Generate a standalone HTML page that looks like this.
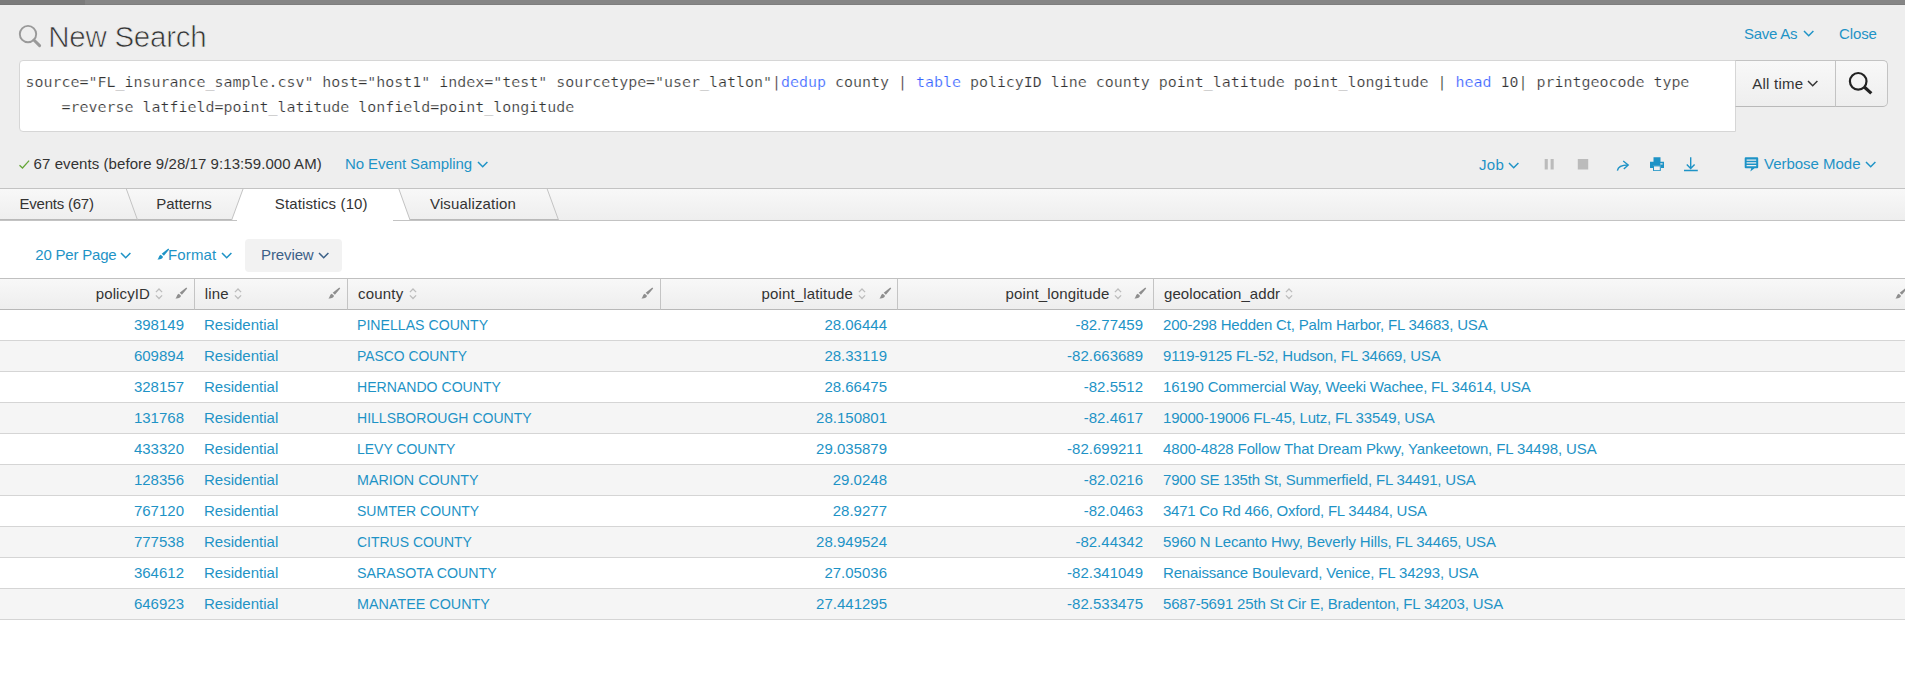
<!DOCTYPE html>
<html lang="en">
<head>
<meta charset="utf-8">
<title>New Search</title>
<style>
html,body{margin:0;padding:0;}
body{width:1905px;height:688px;overflow:hidden;background:#fff;position:relative;font-family:"Liberation Sans",Arial,sans-serif;font-size:15px;color:#333;}
a{text-decoration:none;}
.abs{position:absolute;white-space:nowrap;}
.tx{line-height:18px;margin:0;font-weight:normal;}
#topbar{left:0;top:0;width:1905px;height:4px;background:#868686;border-bottom:1px solid #7e7e7e;box-shadow:0 1px 0 #f6f6f6;}
#topbar i{position:absolute;left:0;top:0;width:85px;height:4px;background:#7b7b7b;border-bottom:1px solid #767676;display:block;}
#head{left:0;top:5px;width:1905px;height:183px;background:#eee;}
#sbox{left:19px;top:60px;width:1717px;height:72px;background:#fff;border:1px solid #d6d6d6;border-radius:4px 0 0 4px;box-sizing:border-box;}
#q{left:25.600px;top:70px;font-family:"DejaVu Sans Mono","Liberation Mono",monospace;font-size:14.95px;line-height:25px;color:#333;white-space:pre;-webkit-text-stroke:0.220px #fff;}
#q b{font-weight:normal;color:#3863ff;}
#tbtn{left:1735px;top:60px;width:101px;height:47px;box-sizing:border-box;border:1px solid #c3c3c3;border-left-color:#d6d6d6;border-bottom-color:#b9b9b9;background:linear-gradient(#f8f8f8,#eee);}
#sbtn{left:1835px;top:60px;width:53px;height:47px;box-sizing:border-box;border:1px solid #c3c3c3;border-bottom-color:#b9b9b9;border-radius:0 5px 5px 0;background:linear-gradient(#f8f8f8,#eee);}
#tabs{left:0;top:188px;width:1905px;height:33px;box-sizing:border-box;border-top:1px solid #c3c3c3;border-bottom:1px solid #c3c3c3;background:linear-gradient(#f8f8f8,#eee);}
#prev{left:245px;top:239px;width:97px;height:33px;background:#f2f2f2;border-radius:4px;}
table{border-collapse:separate;border-spacing:0;position:absolute;left:0;top:278px;width:1905px;table-layout:fixed;font-size:15px;}
th{height:30px;padding:0;border-top:1px solid #c0c0c0;border-bottom:1px solid #b8b8b8;border-right:1px solid #c4c4c4;background:linear-gradient(#f8f8f8,#eee);font-weight:normal;color:#333;position:relative;text-align:left;}
th:last-child{border-right:none;}
th .cs{position:absolute;top:6px;line-height:18px;}
td{height:30px;padding:0 10px 0 9px;border-bottom:1px solid #d5d5d5;color:#1e93c6;line-height:30px;white-space:nowrap;overflow:hidden;}
tr:nth-child(even) td{background:#f5f5f5;}
td .cs{position:relative;display:inline-block;line-height:30px;}
.r{text-align:right;padding-right:11px;font-kerning:none;}
</style>
</head>
<body>
<div id="topbar" class="abs"><i></i></div>
<div id="head" class="abs"></div>

<svg class="abs" style="left:17px;top:23px" width="26" height="26" viewBox="0 0 26 26"><circle cx="11" cy="11.100" r="8.200" fill="none" stroke="#999" stroke-width="1.900"/><path d="M16.900 17 L22.600 22.600" stroke="#999" stroke-width="3" stroke-linecap="round"/></svg>
<h1 id="t_h1" class="abs tx" style="left:48.20px;top:20.00px;font-size:29.5px;color:#333;letter-spacing:-0.244px;line-height:34px;-webkit-text-stroke:0.700px #eee">New Search</h1>
<a id="t_saveas" class="abs tx" style="left:1744.00px;top:25.00px;font-size:15px;color:#1e93c6;letter-spacing:-0.249px">Save As</a>
<svg class="abs" style="left:1803px;top:30px" width="12" height="8" viewBox="0 0 12 8"><path d="M1 1 L5.700 5.700 L10.400 1" fill="none" stroke="#1e93c6" stroke-width="1.500"/></svg>
<a id="t_close" class="abs tx" style="left:1839.00px;top:25.00px;font-size:15px;color:#1e93c6;letter-spacing:-0.112px">Close</a>
<div id="sbox" class="abs"></div>
<div id="q" class="abs">source="FL_insurance_sample.csv" host="host1" index="test" sourcetype="user_latlon"|<b>dedup</b> county | <b>table</b> policyID line county point_latitude point_longitude | <b>head</b> 10| printgeocode type
    =reverse latfield=point_latitude lonfield=point_longitude</div>
<div id="tbtn" class="abs"></div>
<span id="t_alltime" class="abs tx" style="left:1752.20px;top:75.00px;font-size:15px;color:#333;letter-spacing:0.251px">All time</span>
<svg class="abs" style="left:1807px;top:80px" width="12" height="8" viewBox="0 0 12 8"><path d="M1 1 L5.700 5.700 L10.400 1" fill="none" stroke="#333" stroke-width="1.500"/></svg>
<div id="sbtn" class="abs"></div>
<svg class="abs" style="left:1845px;top:69px" width="30" height="30" viewBox="0 0 30 30"><circle cx="13.200" cy="12.300" r="8.300" fill="none" stroke="#222" stroke-width="2.200"/><path d="M19.300 18 L26.300 24.400" stroke="#222" stroke-width="3.200"/></svg>
<svg class="abs" style="left:18px;top:158px" width="13" height="12" viewBox="0 0 13 12"><path d="M1.500 7.200 L4.500 10 L11.100 2.600" fill="none" stroke="#65a637" stroke-width="1.250"/></svg>
<span id="t_status" class="abs tx" style="left:33.60px;top:155.00px;font-size:15px;color:#333;letter-spacing:0.073px">67 events (before 9/28/17 9:13:59.000 AM)</span>
<a id="t_sampling" class="abs tx" style="left:345.00px;top:155.00px;font-size:15px;color:#1e93c6;letter-spacing:-0.089px">No Event Sampling</a>
<svg class="abs" style="left:477px;top:161px" width="12" height="8" viewBox="0 0 12 8"><path d="M1 1 L5.700 5.700 L10.400 1" fill="none" stroke="#1e93c6" stroke-width="1.500"/></svg>
<a id="t_job" class="abs tx" style="left:1478.90px;top:156.00px;font-size:15px;color:#1e93c6;letter-spacing:0.350px">Job</a>
<svg class="abs" style="left:1508px;top:162px" width="12" height="8" viewBox="0 0 12 8"><path d="M1 1 L5.700 5.700 L10.400 1" fill="none" stroke="#1e93c6" stroke-width="1.500"/></svg>
<svg class="abs" style="left:1544px;top:158px" width="12" height="12" viewBox="0 0 12 12"><rect x="0.700" y="1" width="3.100" height="10.500" fill="#bbb"/><rect x="6.600" y="1" width="3.100" height="10.500" fill="#bbb"/></svg>
<svg class="abs" style="left:1577px;top:158px" width="12" height="12" viewBox="0 0 12 12"><rect x="0.800" y="1" width="10.400" height="10.500" fill="#bbb"/></svg>
<svg class="abs" style="left:1615px;top:157px" width="16" height="15" viewBox="0 0 16 15"><path d="M2.400 13.600 C3 10 6 8 13 8" fill="none" stroke="#1e93c6" stroke-width="1.400"/><path d="M8.200 4 L13.200 8 L8.800 12" fill="none" stroke="#1e93c6" stroke-width="1.400"/></svg>
<svg class="abs" style="left:1649px;top:157px" width="16" height="15" viewBox="0 0 16 15"><path d="M4.500 0.300h7v4.700h-7z M1 4.800h14v6.200H12V8.800H4V11H1z" fill="#1e93c6"/><path d="M4 8.600h7.800v5.300H4z" fill="#1e93c6"/><path d="M5 9.400h5.800v3.700H5z" fill="#f0f0f0"/><rect x="11.300" y="6.300" width="2.300" height="1.200" fill="#eee"/></svg>
<svg class="abs" style="left:1683px;top:157px" width="16" height="15" viewBox="0 0 16 15"><path d="M7.700 0.300V11.400 M3.800 7.400 L7.700 11.400 L11.600 7.400 M1 13.500H14.800" fill="none" stroke="#1e93c6" stroke-width="1.400"/></svg>
<svg class="abs" style="left:1743px;top:157px" width="17" height="15" viewBox="0 0 17 15"><path d="M2.700 0.300h11.500a1 1 0 0 1 1 1v8.900a1 1 0 0 1 -1 1h-2.600l-4.300 3.200l1 -3.200h-5.600a1 1 0 0 1 -1 -1v-8.900a1 1 0 0 1 1 -1z" fill="#1e93c6"/><path d="M3.600 3.200h9.600M3.600 5.900h9.600M3.600 8.600h9.600" stroke="#f0f0f0" stroke-width="1.300"/></svg>
<a id="t_verbose" class="abs tx" style="left:1764.00px;top:155.00px;font-size:15px;color:#1e93c6;letter-spacing:-0.023px">Verbose Mode</a>
<svg class="abs" style="left:1865px;top:161px" width="12" height="8" viewBox="0 0 12 8"><path d="M1 1 L5.700 5.700 L10.400 1" fill="none" stroke="#1e93c6" stroke-width="1.500"/></svg>
<div id="tabs" class="abs"></div>
<svg class="abs" style="left:0;top:188px" width="600" height="33" viewBox="0 0 600 33">
<path d="M0 31.500 H232 M410 31.500 H558.500" fill="none" stroke="#b9b9b9" stroke-width="1"/>
<path d="M126.200 0.500 L137.500 32" fill="none" stroke="#c3c3c3" stroke-width="1"/>
<path d="M243 1 L398.800 1 L409.800 32 L393 32 L393 33 L237 33 L237 32 L231.700 32 Z" fill="#fff"/>
<path d="M243.200 0.500 L231.700 32" fill="none" stroke="#c3c3c3" stroke-width="1"/>
<path d="M398.700 0.500 L410.200 32.500" fill="none" stroke="#c3c3c3" stroke-width="1"/>
<path d="M547 0.500 L558.500 32" fill="none" stroke="#c3c3c3" stroke-width="1"/>
</svg>
<span id="t_tab1" class="abs tx" style="left:19.50px;top:195.00px;font-size:15px;color:#333;letter-spacing:-0.225px">Events (67)</span>
<span id="t_tab2" class="abs tx" style="left:156.25px;top:195.00px;font-size:15px;color:#333;letter-spacing:-0.037px">Patterns</span>
<span id="t_tab3" class="abs tx" style="left:274.75px;top:195.00px;font-size:15px;color:#333;letter-spacing:0.142px">Statistics (10)</span>
<span id="t_tab4" class="abs tx" style="left:430.00px;top:195.00px;font-size:15px;color:#333;letter-spacing:0.149px">Visualization</span>
<a id="t_perpage" class="abs tx" style="left:35.25px;top:246.00px;font-size:15px;color:#1e93c6;letter-spacing:-0.200px">20 Per Page</a>
<svg class="abs" style="left:120px;top:252px" width="12" height="8" viewBox="0 0 12 8"><path d="M1 1 L5.700 5.700 L10.400 1" fill="none" stroke="#1e93c6" stroke-width="1.500"/></svg>
<svg class="abs" style="left:156.800px;top:248.400px" width="13" height="13" viewBox="0 0 13 13"><path d="M11.300 0.500 L12.200 1.400 L6.900 7.800 L4.700 5.800 Z M3.800 6.700 L6 8.800 C5.600 10.900 3.600 11.700 0.400 11.500 C2 10.500 1.400 7.700 3.800 6.700 Z" fill="#1e93c6"/></svg>
<a id="t_format" class="abs tx" style="left:168.00px;top:246.00px;font-size:15px;color:#1e93c6;letter-spacing:0.150px">Format</a>
<svg class="abs" style="left:221px;top:252px" width="12" height="8" viewBox="0 0 12 8"><path d="M1 1 L5.700 5.700 L10.400 1" fill="none" stroke="#1e93c6" stroke-width="1.500"/></svg>
<div id="prev" class="abs"></div>
<a id="t_preview" class="abs tx" style="left:261.10px;top:246.00px;font-size:15px;color:#3c6188;letter-spacing:-0.124px">Preview</a>
<svg class="abs" style="left:318px;top:252px" width="12" height="8" viewBox="0 0 12 8"><path d="M1 1 L5.700 5.700 L10.400 1" fill="none" stroke="#3c6188" stroke-width="1.500"/></svg>
<table>
<colgroup><col style="width:195px"><col style="width:153px"><col style="width:313px"><col style="width:237px"><col style="width:256px"><col></colgroup>
<thead><tr>
<th><span id="t_h_0" class="cs" style="left:95.75px;top:6.00px;letter-spacing:0.107px">policyID</span><svg class="abs" style="left:155px;top:9px" width="9" height="12" viewBox="0 0 9 12"><path d="M0.900 4.100 L4 1 L7.100 4.100 M0.900 7.400 L4 10.500 L7.100 7.400" fill="none" stroke="#bdbdbd" stroke-width="1.300"/></svg><svg class="abs" style="left:175px;top:8.200px" width="13" height="13" viewBox="0 0 13 13"><path d="M11.300 0.500 L12.200 1.400 L6.900 7.800 L4.700 5.800 Z M3.800 6.700 L6 8.800 C5.600 10.900 3.600 11.700 0.400 11.500 C2 10.500 1.400 7.700 3.800 6.700 Z" fill="#8e8e8e"/></svg></th>
<th><span id="t_h_1" class="cs" style="left:9.75px;top:6.00px;letter-spacing:0.166px">line</span><svg class="abs" style="left:39.19999999999999px;top:9px" width="9" height="12" viewBox="0 0 9 12"><path d="M0.900 4.100 L4 1 L7.100 4.100 M0.900 7.400 L4 10.500 L7.100 7.400" fill="none" stroke="#bdbdbd" stroke-width="1.300"/></svg><svg class="abs" style="left:133.39999999999998px;top:8.200px" width="13" height="13" viewBox="0 0 13 13"><path d="M11.300 0.500 L12.200 1.400 L6.900 7.800 L4.700 5.800 Z M3.800 6.700 L6 8.800 C5.600 10.900 3.600 11.700 0.400 11.500 C2 10.500 1.400 7.700 3.800 6.700 Z" fill="#8e8e8e"/></svg></th>
<th><span id="t_h_2" class="cs" style="left:10.00px;top:6.00px;letter-spacing:0.200px">county</span><svg class="abs" style="left:61.19999999999999px;top:9px" width="9" height="12" viewBox="0 0 9 12"><path d="M0.900 4.100 L4 1 L7.100 4.100 M0.900 7.400 L4 10.500 L7.100 7.400" fill="none" stroke="#bdbdbd" stroke-width="1.300"/></svg><svg class="abs" style="left:292.79999999999995px;top:8.200px" width="13" height="13" viewBox="0 0 13 13"><path d="M11.300 0.500 L12.200 1.400 L6.900 7.800 L4.700 5.800 Z M3.800 6.700 L6 8.800 C5.600 10.900 3.600 11.700 0.400 11.500 C2 10.500 1.400 7.700 3.800 6.700 Z" fill="#8e8e8e"/></svg></th>
<th><span id="t_h_3" class="cs" style="left:100.50px;top:6.00px;letter-spacing:0.154px">point_latitude</span><svg class="abs" style="left:197.20000000000005px;top:9px" width="9" height="12" viewBox="0 0 9 12"><path d="M0.900 4.100 L4 1 L7.100 4.100 M0.900 7.400 L4 10.500 L7.100 7.400" fill="none" stroke="#bdbdbd" stroke-width="1.300"/></svg><svg class="abs" style="left:217.60000000000002px;top:8.200px" width="13" height="13" viewBox="0 0 13 13"><path d="M11.300 0.500 L12.200 1.400 L6.900 7.800 L4.700 5.800 Z M3.800 6.700 L6 8.800 C5.600 10.900 3.600 11.700 0.400 11.500 C2 10.500 1.400 7.700 3.800 6.700 Z" fill="#8e8e8e"/></svg></th>
<th><span id="t_h_4" class="cs" style="left:107.50px;top:6.00px;letter-spacing:0.142px">point_longitude</span><svg class="abs" style="left:216.20000000000005px;top:9px" width="9" height="12" viewBox="0 0 9 12"><path d="M0.900 4.100 L4 1 L7.100 4.100 M0.900 7.400 L4 10.500 L7.100 7.400" fill="none" stroke="#bdbdbd" stroke-width="1.300"/></svg><svg class="abs" style="left:236.20000000000005px;top:8.200px" width="13" height="13" viewBox="0 0 13 13"><path d="M11.300 0.500 L12.200 1.400 L6.900 7.800 L4.700 5.800 Z M3.800 6.700 L6 8.800 C5.600 10.900 3.600 11.700 0.400 11.500 C2 10.500 1.400 7.700 3.800 6.700 Z" fill="#8e8e8e"/></svg></th>
<th><span id="t_h_5" class="cs" style="left:10.00px;top:6.00px;letter-spacing:0.067px">geolocation_addr</span><svg class="abs" style="left:130.70000000000005px;top:9px" width="9" height="12" viewBox="0 0 9 12"><path d="M0.900 4.100 L4 1 L7.100 4.100 M0.900 7.400 L4 10.500 L7.100 7.400" fill="none" stroke="#bdbdbd" stroke-width="1.300"/></svg><svg class="abs" style="left:741px;top:8.200px" width="13" height="13" viewBox="0 0 13 13"><path d="M11.300 0.500 L12.200 1.400 L6.900 7.800 L4.700 5.800 Z M3.800 6.700 L6 8.800 C5.600 10.900 3.600 11.700 0.400 11.500 C2 10.500 1.400 7.700 3.800 6.700 Z" fill="#8e8e8e"/></svg></th>
</tr></thead>
<tbody>
<tr><td class="r"><span id="t_c0_0" class="cs" style="letter-spacing:0.000px;left:0.00px;top:0.00px">398149</span></td><td><span id="t_c0_1" class="cs" style="letter-spacing:0.000px;left:0.00px;top:0.00px">Residential</span></td><td><span id="t_c0_2" class="cs" style="transform:scaleX(0.9420);transform-origin:0 50%;left:0.00px;top:0.00px">PINELLAS COUNTY</span></td><td class="r"><span id="t_c0_3" class="cs" style="letter-spacing:0.000px;left:0.00px;top:0.00px">28.06444</span></td><td class="r"><span id="t_c0_4" class="cs" style="letter-spacing:0.000px;left:0.00px;top:0.00px">-82.77459</span></td><td><span id="t_c0_5" class="cs" style="letter-spacing:-0.189px;left:0.00px;top:0.00px">200-298 Hedden Ct, Palm Harbor, FL 34683, USA</span></td></tr>
<tr><td class="r"><span id="t_c1_0" class="cs" style="letter-spacing:0.000px;left:0.00px;top:0.00px">609894</span></td><td><span id="t_c1_1" class="cs" style="letter-spacing:0.000px;left:0.00px;top:0.00px">Residential</span></td><td><span id="t_c1_2" class="cs" style="transform:scaleX(0.9250);transform-origin:0 50%;left:0.00px;top:0.00px">PASCO COUNTY</span></td><td class="r"><span id="t_c1_3" class="cs" style="letter-spacing:0.000px;left:0.00px;top:0.00px">28.33119</span></td><td class="r"><span id="t_c1_4" class="cs" style="letter-spacing:0.000px;left:0.00px;top:0.00px">-82.663689</span></td><td><span id="t_c1_5" class="cs" style="letter-spacing:-0.181px;left:0.00px;top:0.00px">9119-9125 FL-52, Hudson, FL 34669, USA</span></td></tr>
<tr><td class="r"><span id="t_c2_0" class="cs" style="letter-spacing:0.000px;left:0.00px;top:0.00px">328157</span></td><td><span id="t_c2_1" class="cs" style="letter-spacing:0.000px;left:0.00px;top:0.00px">Residential</span></td><td><span id="t_c2_2" class="cs" style="transform:scaleX(0.9384);transform-origin:0 50%;left:0.00px;top:0.00px">HERNANDO COUNTY</span></td><td class="r"><span id="t_c2_3" class="cs" style="letter-spacing:0.000px;left:0.00px;top:0.00px">28.66475</span></td><td class="r"><span id="t_c2_4" class="cs" style="letter-spacing:0.000px;left:0.00px;top:0.00px">-82.5512</span></td><td><span id="t_c2_5" class="cs" style="letter-spacing:-0.195px;left:0.00px;top:0.00px">16190 Commercial Way, Weeki Wachee, FL 34614, USA</span></td></tr>
<tr><td class="r"><span id="t_c3_0" class="cs" style="letter-spacing:0.000px;left:0.00px;top:0.00px">131768</span></td><td><span id="t_c3_1" class="cs" style="letter-spacing:0.000px;left:0.00px;top:0.00px">Residential</span></td><td><span id="t_c3_2" class="cs" style="transform:scaleX(0.9355);transform-origin:0 50%;left:0.00px;top:0.00px">HILLSBOROUGH COUNTY</span></td><td class="r"><span id="t_c3_3" class="cs" style="letter-spacing:0.000px;left:0.00px;top:0.00px">28.150801</span></td><td class="r"><span id="t_c3_4" class="cs" style="letter-spacing:0.000px;left:0.00px;top:0.00px">-82.4617</span></td><td><span id="t_c3_5" class="cs" style="letter-spacing:-0.189px;left:0.00px;top:0.00px">19000-19006 FL-45, Lutz, FL 33549, USA</span></td></tr>
<tr><td class="r"><span id="t_c4_0" class="cs" style="letter-spacing:0.000px;left:0.00px;top:0.00px">433320</span></td><td><span id="t_c4_1" class="cs" style="letter-spacing:0.000px;left:0.00px;top:0.00px">Residential</span></td><td><span id="t_c4_2" class="cs" style="transform:scaleX(0.9314);transform-origin:0 50%;left:0.00px;top:0.00px">LEVY COUNTY</span></td><td class="r"><span id="t_c4_3" class="cs" style="letter-spacing:0.000px;left:0.00px;top:0.00px">29.035879</span></td><td class="r"><span id="t_c4_4" class="cs" style="letter-spacing:0.000px;left:0.00px;top:0.00px">-82.699211</span></td><td><span id="t_c4_5" class="cs" style="letter-spacing:-0.128px;left:0.00px;top:0.00px">4800-4828 Follow That Dream Pkwy, Yankeetown, FL 34498, USA</span></td></tr>
<tr><td class="r"><span id="t_c5_0" class="cs" style="letter-spacing:0.000px;left:0.00px;top:0.00px">128356</span></td><td><span id="t_c5_1" class="cs" style="letter-spacing:0.000px;left:0.00px;top:0.00px">Residential</span></td><td><span id="t_c5_2" class="cs" style="transform:scaleX(0.9528);transform-origin:0 50%;left:0.00px;top:0.00px">MARION COUNTY</span></td><td class="r"><span id="t_c5_3" class="cs" style="letter-spacing:0.000px;left:0.00px;top:0.00px">29.0248</span></td><td class="r"><span id="t_c5_4" class="cs" style="letter-spacing:0.000px;left:0.00px;top:0.00px">-82.0216</span></td><td><span id="t_c5_5" class="cs" style="letter-spacing:-0.178px;left:0.00px;top:0.00px">7900 SE 135th St, Summerfield, FL 34491, USA</span></td></tr>
<tr><td class="r"><span id="t_c6_0" class="cs" style="letter-spacing:0.000px;left:0.00px;top:0.00px">767120</span></td><td><span id="t_c6_1" class="cs" style="letter-spacing:0.000px;left:0.00px;top:0.00px">Residential</span></td><td><span id="t_c6_2" class="cs" style="transform:scaleX(0.9341);transform-origin:0 50%;left:0.00px;top:0.00px">SUMTER COUNTY</span></td><td class="r"><span id="t_c6_3" class="cs" style="letter-spacing:0.000px;left:0.00px;top:0.00px">28.9277</span></td><td class="r"><span id="t_c6_4" class="cs" style="letter-spacing:0.000px;left:0.00px;top:0.00px">-82.0463</span></td><td><span id="t_c6_5" class="cs" style="letter-spacing:-0.250px;left:0.00px;top:0.00px">3471 Co Rd 466, Oxford, FL 34484, USA</span></td></tr>
<tr><td class="r"><span id="t_c7_0" class="cs" style="letter-spacing:0.000px;left:0.00px;top:0.00px">777538</span></td><td><span id="t_c7_1" class="cs" style="letter-spacing:0.000px;left:0.00px;top:0.00px">Residential</span></td><td><span id="t_c7_2" class="cs" style="transform:scaleX(0.9317);transform-origin:0 50%;left:0.00px;top:0.00px">CITRUS COUNTY</span></td><td class="r"><span id="t_c7_3" class="cs" style="letter-spacing:0.000px;left:0.00px;top:0.00px">28.949524</span></td><td class="r"><span id="t_c7_4" class="cs" style="letter-spacing:0.000px;left:0.00px;top:0.00px">-82.44342</span></td><td><span id="t_c7_5" class="cs" style="letter-spacing:-0.135px;left:0.00px;top:0.00px">5960 N Lecanto Hwy, Beverly Hills, FL 34465, USA</span></td></tr>
<tr><td class="r"><span id="t_c8_0" class="cs" style="letter-spacing:0.000px;left:0.00px;top:0.00px">364612</span></td><td><span id="t_c8_1" class="cs" style="letter-spacing:0.000px;left:0.00px;top:0.00px">Residential</span></td><td><span id="t_c8_2" class="cs" style="transform:scaleX(0.9497);transform-origin:0 50%;left:0.00px;top:0.00px">SARASOTA COUNTY</span></td><td class="r"><span id="t_c8_3" class="cs" style="letter-spacing:0.000px;left:0.00px;top:0.00px">27.05036</span></td><td class="r"><span id="t_c8_4" class="cs" style="letter-spacing:0.000px;left:0.00px;top:0.00px">-82.341049</span></td><td><span id="t_c8_5" class="cs" style="letter-spacing:-0.155px;left:0.00px;top:0.00px">Renaissance Boulevard, Venice, FL 34293, USA</span></td></tr>
<tr><td class="r"><span id="t_c9_0" class="cs" style="letter-spacing:0.000px;left:0.00px;top:0.00px">646923</span></td><td><span id="t_c9_1" class="cs" style="letter-spacing:0.000px;left:0.00px;top:0.00px">Residential</span></td><td><span id="t_c9_2" class="cs" style="transform:scaleX(0.9565);transform-origin:0 50%;left:0.00px;top:0.00px">MANATEE COUNTY</span></td><td class="r"><span id="t_c9_3" class="cs" style="letter-spacing:0.000px;left:0.00px;top:0.00px">27.441295</span></td><td class="r"><span id="t_c9_4" class="cs" style="letter-spacing:0.000px;left:0.00px;top:0.00px">-82.533475</span></td><td><span id="t_c9_5" class="cs" style="letter-spacing:-0.181px;left:0.00px;top:0.00px">5687-5691 25th St Cir E, Bradenton, FL 34203, USA</span></td></tr>
</tbody>
</table>
</body>
</html>
